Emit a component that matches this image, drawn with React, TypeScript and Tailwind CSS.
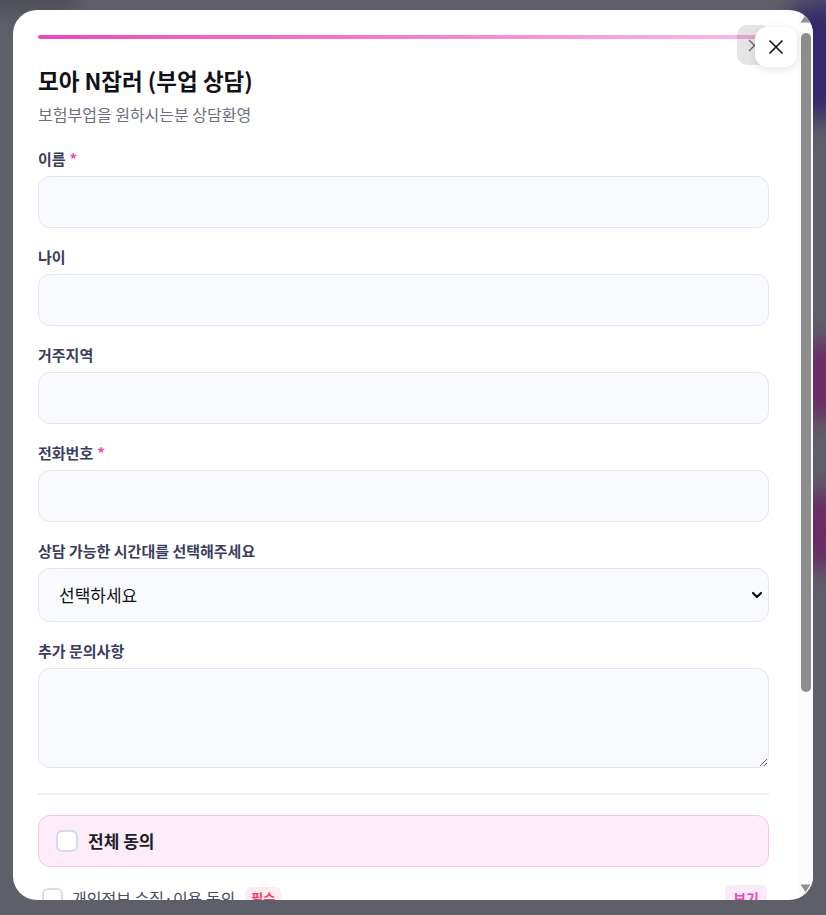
import React from 'react';

const KR = { fontFamily: '"Noto Sans CJK KR", "Noto Sans", sans-serif' };

const Field = ({ label, required, children }: { label: string; required?: boolean; children: React.ReactNode }) => (
  <div className="mt-[18px] first:mt-0">
    <div className="h-[22px] flex items-center text-[15px] font-bold text-[#3b3d5c]">
      {label}
      {required && <span className="ml-1 text-[#ec48c0]">*</span>}
    </div>
    <div className="mt-[6px]">{children}</div>
  </div>
);

const inputCls =
  'block w-full h-[52px] rounded-xl border border-[#e3e4f0] bg-[#f9fafe] px-5 text-[16px] outline-none';

const Checkbox = ({ big }: { big?: boolean }) => (
  <span
    className={
      big
        ? 'block w-[22px] h-[22px] rounded-md border-2 border-[#d5d9ec] bg-white'
        : 'block w-[21px] h-[21px] rounded-md border-2 border-[#d7dbeb] bg-white'
    }
  />
);

const AgreeRow = ({ text, tag, tagCls }: { text: string; tag: string; tagCls: string }) => (
  <div className="flex items-center h-[26px]">
    <div className="pl-1">
      <Checkbox />
    </div>
    <span className="ml-[9px] text-[16px] text-[#4a4c5e]">{text}</span>
    <span className={`ml-2.5 px-1.5 rounded-md text-[13px] font-bold leading-[22px] ${tagCls}`}>{tag}</span>
    <button className="ml-auto mr-[2px] px-2 h-[26px] rounded-md bg-[#fdeaf7] text-[14px] font-bold text-[#ec48c0]">보기</button>
  </div>
);

// classic scrollbar look, drawn in flow beside the content
const ScrollBar = () => (
  <div className="w-[15px] shrink-0 flex flex-col items-center bg-[#fbfbfb] pt-[4px] pb-[7px]">
    <svg width="11" height="9" viewBox="0 0 11 9">
      <path d="M5.5 1L10.5 8.5H0.5Z" fill="#8f8f8f" />
    </svg>
    <div className="mt-[10px] w-[10px] h-[659px] rounded-full bg-[#8d8d8d]" />
    <div className="flex-1" />
    <svg width="11" height="9" viewBox="0 0 11 9">
      <path d="M0.5 0.5H10.5L5.5 8Z" fill="#8f8f8f" />
    </svg>
  </div>
);

export default function App() {
  return (
    <div className="relative h-screen w-full overflow-hidden bg-[#5e5f69]" style={KR}>
      {/* blurred page behind the overlay */}
      <div className="absolute -right-6 top-0 w-16 h-[120px] rounded-full bg-[#33296c] blur-md" />
      <div className="absolute -right-6 top-[340px] w-14 h-[80px] rounded-full bg-[#6d2a68] blur-md" />
      <div className="absolute -right-6 top-[490px] w-14 h-[80px] rounded-full bg-[#6a2a66] blur-md" />
      <div className="absolute -left-4 -top-3 w-24 h-6 rounded-full bg-[#4e4f57] blur-sm" />

      <div className="relative pt-[10px] pl-[13px]">
        <div className="relative w-[800px] h-[890px]">
          <div className="h-full flex overflow-hidden rounded-[24px] bg-white">
            <div className="flex-1 min-w-0 overflow-hidden pl-[25px] pr-[29px] pt-[25px]">
              {/* progress */}
              <div className="h-1 rounded-full bg-gradient-to-r from-[#ec48c0] via-[#f17fd0] to-[#f8bce6]" />

              <h1 className="mt-[26px] text-[22.5px] leading-[30px] font-bold text-[#111218]">모아 N잡러 (부업 상담)</h1>
              <p className="mt-[7px] text-[16px] leading-[24px] text-[#6b6e80]">보험부업을 원하시는분 상담환영</p>

              <div className="mt-[22px]">
                <Field label="이름" required>
                  <input className={inputCls} />
                </Field>
                <Field label="나이">
                  <input className={inputCls} />
                </Field>
                <Field label="거주지역">
                  <input className={inputCls} />
                </Field>
                <Field label="전화번호" required>
                  <input className={inputCls} />
                </Field>
                <Field label="상담 가능한 시간대를 선택해주세요">
                  <div className="relative">
                    <select
                      className="block w-full h-[54px] appearance-none rounded-xl border border-[#e3e4f0] bg-[#f9fafe] pl-5 pr-10 text-[17px] text-[#111] outline-none"
                      style={KR}
                    >
                      <option>선택하세요</option>
                    </select>
                    <svg
                      className="pointer-events-none absolute right-[6px] top-1/2 -translate-y-1/2"
                      width="12"
                      height="12"
                      viewBox="0 0 12 12"
                      fill="none"
                    >
                      <path d="M2 4l4 4 4-4" stroke="#111" strokeWidth="2.2" strokeLinecap="round" strokeLinejoin="round" />
                    </svg>
                  </div>
                </Field>
                <Field label="추가 문의사항">
                  <textarea className="block w-full h-[100px] rounded-xl border border-[#e3e4f0] bg-[#f9fafe] px-5 py-3 text-[16px] outline-none" />
                </Field>
              </div>

              <div className="mt-[25px] h-[2px] bg-[#eef0f6]" />

              {/* agreements */}
              <div className="mt-[20px] h-[52px] flex items-center px-[17px] rounded-xl border border-[#f8c3ea] bg-[#fdedf9]">
                <Checkbox big />
                <span className="ml-[10px] text-[17px] font-bold text-[#1d1e2a]">전체 동의</span>
              </div>

              <div className="mt-[18px] flex flex-col gap-[16px]">
                <AgreeRow text="개인정보 수집·이용 동의" tag="필수" tagCls="bg-[#fdecef] text-[#f2416e]" />
                <AgreeRow text="개인정보 제3자 제공 동의" tag="필수" tagCls="bg-[#fdecef] text-[#f2416e]" />
                <AgreeRow text="마케팅 정보 수신 동의" tag="선택" tagCls="bg-[#eef0f6] text-[#6b6e80]" />
              </div>

              <button className="mt-[28px] w-full h-[56px] rounded-xl bg-gradient-to-r from-[#ec48c0] to-[#f17fd0] text-[17px] font-bold text-white">
                상담 신청하기
              </button>
            </div>
            <ScrollBar />
          </div>

          {/* close buttons */}
          <div className="absolute left-[724px] top-[15px] w-[34px] h-10 rounded-[10px] bg-black/10 flex items-center justify-center">
            <svg width="13" height="13" viewBox="0 0 13 13" fill="none">
              <path d="M1 1l11 11M12 1L1 12" stroke="#6b6b73" strokeWidth="1.4" />
            </svg>
          </div>
          <button className="absolute left-[742px] top-[17px] w-[42px] h-10 rounded-xl bg-white shadow-[0_2px_8px_rgba(0,0,0,0.12)] flex items-center justify-center">
            <svg width="16" height="16" viewBox="0 0 16 16" fill="none">
              <path d="M1.5 1.5l13 13M14.5 1.5l-13 13" stroke="#111" strokeWidth="1.6" />
            </svg>
          </button>
        </div>
      </div>
    </div>
  );
}
